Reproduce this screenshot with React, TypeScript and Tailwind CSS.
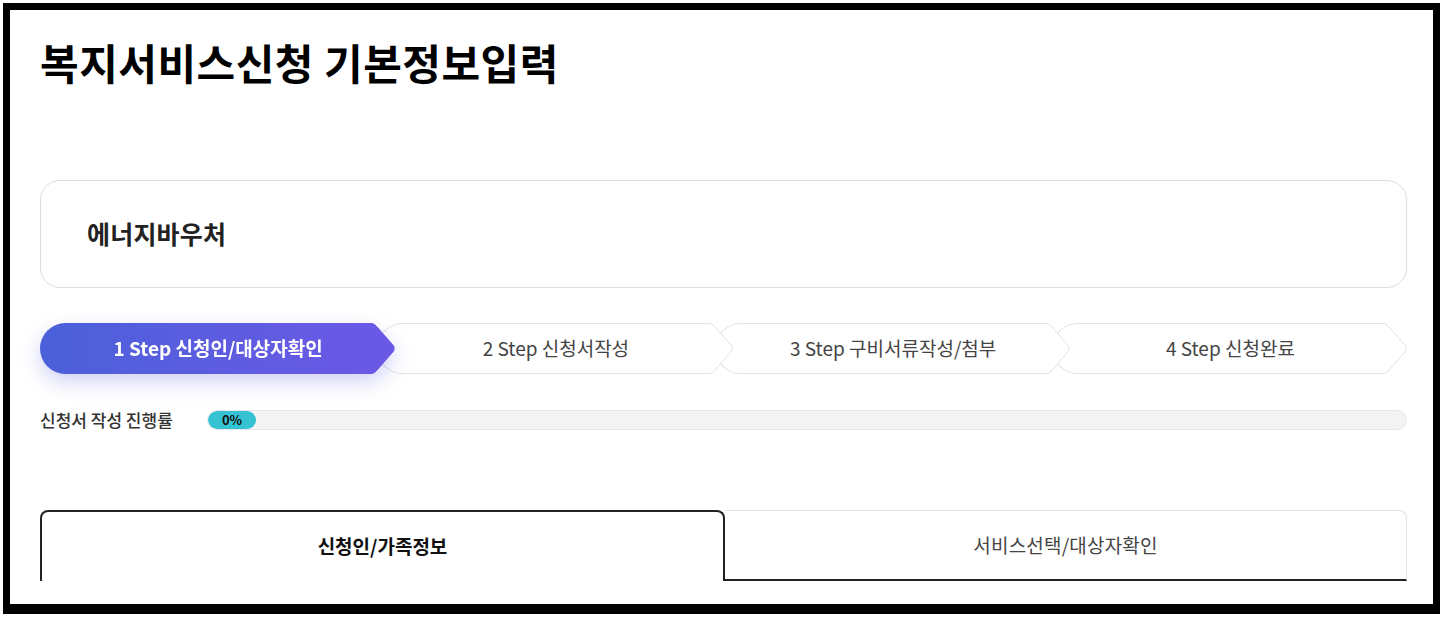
import React from "react";

const font = { fontFamily: '"Noto Sans CJK KR", "Noto Sans", sans-serif' };

const steps = [
  { no: 1, label: "신청인/대상자확인" },
  { no: 2, label: "신청서작성" },
  { no: 3, label: "구비서류작성/첨부" },
  { no: 4, label: "신청완료" },
];

const Arrow = ({ active }: { active: boolean }) => (
  <svg width="28" height="51" viewBox="0 0 28 51" className="shrink-0 -ml-px">
    <path
      d="M0 0.5 H4 Q7 0.5 9 2.8 L26.5 22.8 Q28 25.5 26.5 28.2 L9 48.2 Q7 50.5 4 50.5 H0"
      fill={active ? "#6a59e6" : "#ffffff"}
      stroke={active ? "#6a59e6" : "#e2e2e2"}
      strokeWidth="1"
    />
  </svg>
);

const StepBar = () => (
  <div className="flex">
    {steps.map((s, i) => {
      const active = i === 0;
      const z = ["z-40", "z-30", "z-20", "z-10"][i];
      return (
        <div
          key={s.no}
          className={`relative flex flex-1 h-[51px] ${z} ${i > 0 ? "-ml-[18px]" : ""} ${
            active ? "drop-shadow-[0_8px_10px_rgba(88,92,225,0.28)]" : ""
          }`}
        >
          <div
            className={`flex flex-1 items-center justify-center pl-[28px] rounded-l-[26px] text-[19px] ${
              active
                ? "bg-gradient-to-r from-[#4a60d9] to-[#6a59e6] text-white font-bold"
                : "bg-white border border-r-0 border-[#e2e2e2] text-[#444]"
            }`}
          >
            {s.no} Step {s.label}
          </div>
          <Arrow active={active} />
        </div>
      );
    })}
  </div>
);

export default function App() {
  return (
    <div className="w-[1443px] h-[617px] bg-white p-[3px]" style={font}>
      <div className="h-[611px] border-[7px] border-b-[10px] border-black overflow-hidden pl-[30px] pr-[26px] pt-[31px]">
        <h1 className="text-[42px] leading-[42px] font-bold tracking-[0.5px] text-black">
          복지서비스신청 기본정보입력
        </h1>

        <div className="mt-[97px] h-[108px] rounded-[20px] border border-[#dddddd] flex items-center pl-[46px]">
          <span className="text-[25px] font-bold tracking-[0.2px] text-[#222]">에너지바우처</span>
        </div>

        <div className="mt-[35px]">
          <StepBar />
        </div>

        <div className="mt-[36px] flex items-center h-[20px]">
          <span className="w-[167px] shrink-0 text-[17px] font-medium text-[#333]">
            신청서 작성 진행률
          </span>
          <div className="flex-1 h-[20px] rounded-full bg-[#f4f4f4] border border-[#e6e6e6] overflow-hidden">
            <div className="w-[48px] h-full rounded-full bg-[#35c2d2] flex items-center justify-center text-[13px] font-bold text-[#111]">
              0%
            </div>
          </div>
        </div>

        <div className="mt-[80px] flex h-[71px]">
          <div className="flex-1 flex items-center justify-center rounded-t-[8px] border-2 border-b-0 border-[#222] text-[19px] font-bold text-[#111]">
            신청인/가족정보
          </div>
          <div className="flex-1 flex items-center justify-center rounded-tr-[8px] border-t border-r border-[#e2e2e2] border-b-2 border-b-[#222] text-[19px] tracking-[0.2px] text-[#444]">
            서비스선택/대상자확인
          </div>
        </div>
      </div>
    </div>
  );
}
